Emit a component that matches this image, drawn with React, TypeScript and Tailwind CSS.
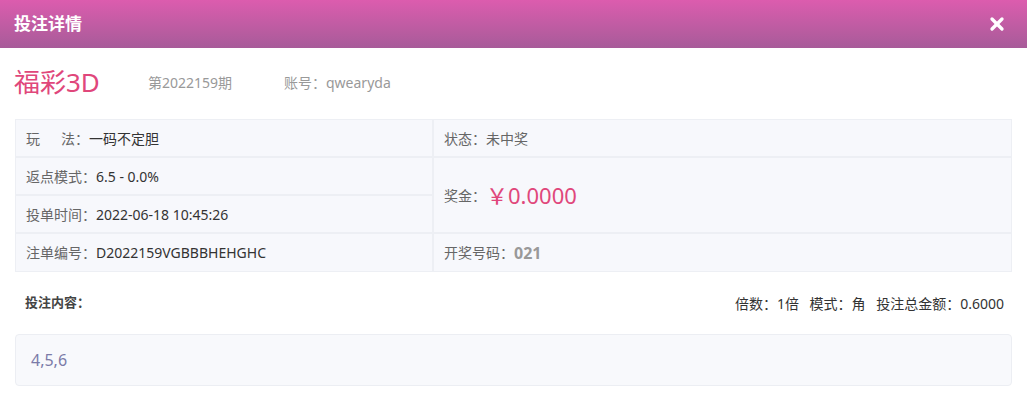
import { X } from 'lucide-react';

const font = { fontFamily: '"Noto Sans", "Noto Sans CJK SC", sans-serif' };

function Cell({ children, className = '' }: { children: React.ReactNode; className?: string }) {
  return (
    <div className={`flex items-center bg-[#f7f8fc] px-[10px] text-[14px] ${className}`}>
      {children}
    </div>
  );
}

export default function App() {
  return (
    <div className="h-[409px] w-[1027px] bg-white" style={font}>
      {/* ヘッダー */}
      <div className="flex h-[48px] items-center justify-between bg-gradient-to-b from-[#dc5cae] to-[#a75b99] pl-[14px] pr-[20px]">
        <h1 className="text-[17px] font-bold text-white">投注详情</h1>
        <X className="h-[20px] w-[20px] text-white" strokeWidth={4} />
      </div>

      {/* タイトル行 */}
      <div className="flex h-[71px] items-center pl-[14px] pb-[2px]">
        <span className="w-[134px] text-[26px] text-[#e0477b]">福彩3D</span>
        <span className="w-[136px] text-[14px] text-[#999]">第2022159期</span>
        <span className="text-[14px] text-[#999]">账号：qwearyda</span>
      </div>

      {/* 詳細テーブル */}
      <div className="mx-[15px] grid grid-cols-[416px_1fr] grid-rows-[36px_36px_36px_37px] gap-[2px] border border-[#edeff4] bg-[#edeff4]">
        <Cell>
          <span className="text-[#666]">玩&emsp;&ensp;法：</span>
          <span className="text-[#333]">一码不定胆</span>
        </Cell>
        <Cell>
          <span className="text-[#666]">状态：</span>
          <span className="text-[#666]">未中奖</span>
        </Cell>
        <Cell>
          <span className="text-[#666]">返点模式：</span>
          <span className="text-[#333]">6.5 - 0.0%</span>
        </Cell>
        <Cell className="row-span-2">
          <span className="text-[#666]">奖金：</span>
          <span className="text-[22px] text-[#e0477b]">￥0.0000</span>
        </Cell>
        <Cell>
          <span className="text-[#666]">投单时间：</span>
          <span className="text-[#333]">2022-06-18 10:45:26</span>
        </Cell>
        <Cell>
          <span className="text-[#666]">注单编号：</span>
          <span className="text-[#333]">D2022159VGBBBHEHGHC</span>
        </Cell>
        <Cell>
          <span className="text-[#666]">开奖号码：</span>
          <span className="text-[16px] font-bold text-[#999]">021</span>
        </Cell>
      </div>

      {/* 投注内容 */}
      <div className="flex h-[62px] items-center justify-between pl-[25px] pr-[23px]">
        <span className="text-[13px] font-bold text-[#444]">投注内容：</span>
        <span className="text-[14px] text-[#333]">
          倍数：1倍&ensp;&nbsp;模式：角&ensp;&nbsp;投注总金额：0.6000
        </span>
      </div>
      <div className="mx-[15px] flex h-[52px] items-center rounded-[4px] border border-[#eceef3] bg-[#f8f9fc] px-[15px]">
        <span className="text-[16px] text-[#7b7ba8]">4,5,6</span>
      </div>
    </div>
  );
}
